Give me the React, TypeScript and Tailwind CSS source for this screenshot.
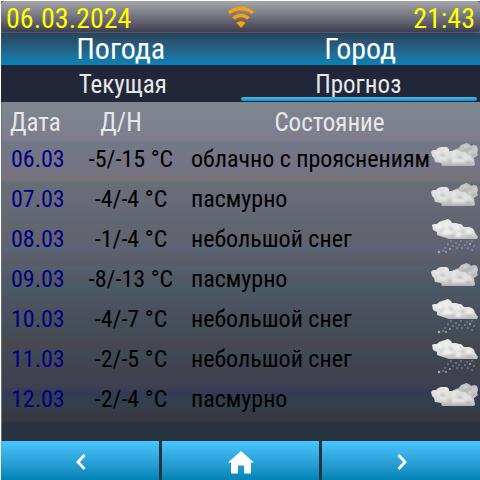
const navItems = ["Погода", "Город"];

const forecast = [
  { date: "06.03", temp: "-5/-15 °C", state: "облачно с прояснениям", snow: false },
  { date: "07.03", temp: "-4/-4 °C", state: "пасмурно", snow: false },
  { date: "08.03", temp: "-1/-4 °C", state: "небольшой снег", snow: true },
  { date: "09.03", temp: "-8/-13 °C", state: "пасмурно", snow: false },
  { date: "10.03", temp: "-4/-7 °C", state: "небольшой снег", snow: true },
  { date: "11.03", temp: "-2/-5 °C", state: "небольшой снег", snow: true },
  { date: "12.03", temp: "-2/-4 °C", state: "пасмурно", snow: false },
];

// x, y, radius
const flakes = [
  [20, 22, 1], [25, 24, 1], [30, 22, 1], [36, 23, 1], [41, 22, 1], [17, 25, 1],
  [22, 27, 1], [28, 26, 1], [34, 26, 1], [39, 25, 1.4], [43, 27, 1], [14, 29, 1],
  [19, 30, 1.2], [26, 29, 1], [31, 29, 1], [37, 29, 1], [12, 32, 1], [8, 33, 1.6],
  [15, 33, 1.2], [41, 31, 1],
];

function WifiIcon() {
  return (
    <svg viewBox="0 0 26 22" className="h-[22px] w-[26px]" fill="none" stroke="#ffa200" strokeWidth="3.5">
      <path d="M1 7C8 1 18 1 25 7" />
      <path d="M5.5 12.5C9.500 8.500 16.500 8.500 20.500 12.500" />
      <path d="M8.500 17C11 14.500 15 14.500 17.500 17L13 22Z" fill="#ffa200" stroke="none" />
    </svg>
  );
}

function CloudIcon() {
  return (
    <svg viewBox="0 0 48 24" className="block h-6 w-12">
      <defs>
        <linearGradient id="cloudFront" x1="0" y1="0" x2="0" y2="1">
          <stop offset="0" stopColor="#e2e2e2" />
          <stop offset=".7" stopColor="#d8d8d9" />
          <stop offset="1" stopColor="#b0b0b2" />
        </linearGradient>
        <linearGradient id="cloudBack" x1="0" y1="0" x2="0" y2="1">
          <stop offset="0" stopColor="#c2c2c3" />
          <stop offset="1" stopColor="#c4c4c5" />
        </linearGradient>
        <filter id="cloudSoft">
          <feGaussianBlur stdDeviation=".8" />
        </filter>
      </defs>
      <path d="M21 8L25 6L28 5L30 2L33 1L35 0L38 1L40 3L43 2L46 3L47 7L46 10L47 12L43 15L44 22L28 21Z" fill="url(#cloudBack)" />
      <path d="M0 9L2 7L5 7L7 5L10 4L13 4L16 4L18 6L18 8L21 8L24 7L27 7L30 9L34 9L36 11L40 13L42 18L44 21L43 23L11 23L10 20L4 19L3 15L1 13Z" fill="url(#cloudFront)" />
      <g fill="none" filter="url(#cloudSoft)">
        <path d="M5 11L9 9M13 8L16 10M8 16L12 14L16 16M21 13L25 11M22 18L28 17L33 18M33 14L37 16" stroke="#f0f0f0" strokeWidth="3" opacity=".8" />
        <path d="M33 4L36 4M43 6L45 7M38 9L41 9" stroke="#dedede" strokeWidth="2.500" opacity=".8" />
        <path d="M10 12L14 13M17 18L20 17M27 14L31 15M36 19L39 20M32 7L35 7L41 6M41 12L44 12" stroke="#9a9a9c" strokeWidth="2" opacity=".6" />
      </g>
    </svg>
  );
}

function SnowIcon() {
  return (
    <svg viewBox="0 0 48 35" className="block h-[35px] w-12">
      <defs>
        <linearGradient id="snowCloud" x1="0" y1="0" x2="0" y2="1">
          <stop offset="0" stopColor="#ececec" />
          <stop offset=".7" stopColor="#e0e0e0" />
          <stop offset="1" stopColor="#bcbcbe" />
        </linearGradient>
        <filter id="snowSoft">
          <feGaussianBlur stdDeviation=".8" />
        </filter>
      </defs>
      <path d="M1 6L3 5L6 5L8 3L11 2L14 1L17 0L20 2L21 4L25 4L28 5L30 5L33 8L38 8L41 9L43 11L44 14L47 18L46 20L18 20L12 18L6 16L6 13L2 11Z" fill="url(#snowCloud)" />
      <g fill="none" filter="url(#snowSoft)">
        <path d="M6 8L11 6M14 5L17 7M12 14L17 12L21 14M24 9L28 8M25 17L30 15M36 12L40 14" stroke="#fafafa" strokeWidth="3" opacity=".8" />
        <path d="M9 12L12 11M18 9L22 11M20 17L24 16M30 12L34 13M36 17L41 17" stroke="#a0a0a3" strokeWidth="2" opacity=".5" />
      </g>
      {flakes.map(([x, y, r]) => (
        <circle key={`${x}-${y}`} cx={x} cy={y} r={r / 1.3} fill="#c9cdd2" opacity=".75" />
      ))}
    </svg>
  );
}

function Header() {
  return (
    <header className="flex h-8 items-center justify-between rounded-sm border-b border-[#56566a] bg-linear-to-b from-[#a5a5a9] via-[#74747f] to-[#3e3e51] px-[5px] text-[28px] leading-8 text-[#ffff00]">
      <time className="flex-1 pt-1">06.03.2024</time>
      <WifiIcon />
      <time className="flex-1 pt-1 text-right">21:43</time>
    </header>
  );
}

function Navigation() {
  return (
    <nav>
      <div className="grid h-8 grid-cols-2 bg-linear-to-b from-[#29435a] to-[#0083b6] text-center text-[30px] leading-8 text-white">
        {navItems.map((item) => (
          <a key={item} href="#">{item}</a>
        ))}
      </div>
      <div className="grid h-[37px] grid-cols-2 bg-[#212739] text-center text-[25px] leading-8 text-[#e8e8e8]">
        <a href="#" className="h-9 pt-1 pl-1">Текущая</a>
        <a href="#" aria-current="page" className="flex flex-col pt-1">
          <span className="h-7 pr-1">Прогноз</span>
          <span className="mr-[3px] h-1 rounded-xs bg-linear-to-b from-[#3cbcf0] to-[#0b91c8]" />
        </a>
      </div>
    </nav>
  );
}

function Forecast() {
  return (
    <main className="flex-1 border-l border-[#667078] bg-[linear-gradient(#7d878f,#7f7d8d_11%,#727886_12%,#757384_20%,#747477_23%,#666e77_24%,#696a78_29%,#5f6771_35%,#65626f_40%,#5a6575_43%,#5c5a67_47%,#53606d_49%,#545862_52%,#4b5b66_54%,#4b4f5e_62%,#434f59_66%,#47474f_72%,#3f4a54_74%,#41424f_79%,#3d4051_84%,#323b55_86%,#33404a_89%,#373640_94%,#2a3442_95%,#27333f)]">
      <table className="w-full table-fixed border-collapse whitespace-nowrap text-2xl">
        <colgroup>
          <col className="w-[69px]" />
          <col className="w-[120px]" />
          <col />
          <col className="w-[49px]" />
        </colgroup>
        <thead>
          <tr className="h-[37px] text-[25px] text-[#e8e8e8]">
            <th className="p-0 pt-1 pl-2 text-left font-normal">Дата</th>
            <th className="p-0 pt-1 pr-5 font-normal">Д/Н</th>
            <th colSpan={2} className="p-0 pt-1 pr-3 font-normal">Состояние</th>
          </tr>
        </thead>
        <tbody>
          {forecast.map((day) => (
            <tr key={day.date} className="h-10 text-black">
              <td className="p-0 pl-[9px] text-[#000080]">{day.date}</td>
              <td className="p-0 text-center">{day.temp}</td>
              <td className="overflow-hidden p-0">{day.state}</td>
              <td className="p-0 align-top">
                {day.snow ? (
                  <SnowIcon />
                ) : (
                  <div className="pt-1"><CloudIcon /></div>
                )}
              </td>
            </tr>
          ))}
        </tbody>
      </table>
    </main>
  );
}

function Footer() {
  const button = "flex items-center justify-center bg-linear-to-b from-[#49c5ff] to-[#0083b6] pt-0.5 pl-0.5";
  return (
    <footer className="grid h-[39px] grid-cols-3 gap-[3px] bg-[#27333f]">
      <button aria-label="Назад" className={button}>
        <svg viewBox="0 0 12 16" className="h-4 w-3" fill="none" stroke="#fff" strokeWidth="2.8">
          <path d="M9.500 1L3 8L9.500 15" />
        </svg>
      </button>
      <button aria-label="Домой" className={button}>
        <svg viewBox="0 0 28 24" className="h-6 w-7" fill="#fff">
          <path d="M14 1L27 12.500H24V23.500H17V15.500H11V23.500H4V12.500H1Z" />
        </svg>
      </button>
      <button aria-label="Вперёд" className={button}>
        <svg viewBox="0 0 12 16" className="h-4 w-3" fill="none" stroke="#fff" strokeWidth="2.8">
          <path d="M2.500 1L9 8L2.500 15" />
        </svg>
      </button>
    </footer>
  );
}

export default function App() {
  return (
    <div className="flex min-h-screen flex-col border-t border-l border-white bg-[#55657a] font-['Roboto_Condensed','Liberation_Sans_Narrow','Roboto',sans-serif]">
      <Header />
      <Navigation />
      <Forecast />
      <Footer />
    </div>
  );
}
